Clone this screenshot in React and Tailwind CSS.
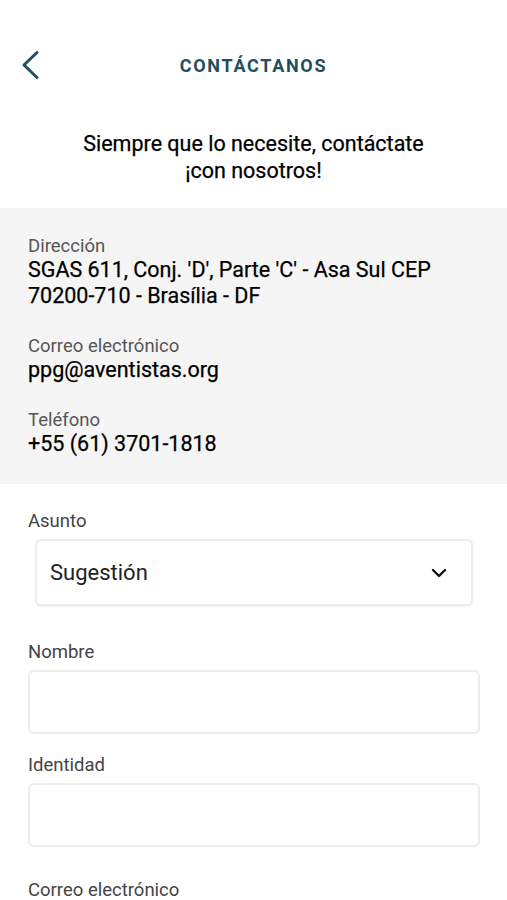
import React from 'react';
import { ChevronDown } from 'lucide-react';

const InfoItem = ({ label, children, className = '' }) => (
  <div className={className}>
    <p className="text-[18.5px] leading-[22px] text-[#555555]">{label}</p>
    <p className="text-[21.5px] leading-[26px] text-black [-webkit-text-stroke:0.25px_black]">{children}</p>
  </div>
);

const Field = ({ label, className = '' }) => (
  <div className={className}>
    <label className="block text-[18.5px] leading-[22px] text-[#444444]">{label}</label>
    <input
      type="text"
      className="mt-[7px] block h-[64px] w-[452px] rounded-[6px] border-2 border-[#ececec] bg-white px-4 outline-none"
    />
  </div>
);

export default function App() {
  return (
    <div className="min-h-[900px] w-[507px] overflow-hidden bg-white font-['Roboto',sans-serif]">
      <header className="relative flex h-[130px] items-center justify-center">
        <button className="absolute left-[20px] top-[50px] text-[#1f4f60]" aria-label="Volver">
          <svg width="20" height="30" viewBox="0 0 20 30" fill="none">
            <polyline
              points="17,2.5 4,15 17,27.5"
              stroke="currentColor"
              strokeWidth="3"
              strokeLinecap="round"
              strokeLinejoin="round"
            />
          </svg>
        </button>
        <h1 className="text-[18px] font-bold tracking-[1.7px] text-[#1f4f60]">CONTÁCTANOS</h1>
      </header>

      <p className="text-center text-[21.5px] leading-[27px] text-black [-webkit-text-stroke:0.25px_black]">
        Siempre que lo necesite, contáctate
        <br />
        ¡con nosotros!
      </p>

      <section className="mt-[24px] bg-[#f5f5f5] px-[28px] pb-[27px] pt-[27px]">
        <InfoItem label="Dirección">
          SGAS 611, Conj. 'D', Parte 'C' - Asa Sul CEP
          <br />
          70200-710 - Brasília - DF
        </InfoItem>
        <InfoItem label="Correo electrónico" className="mt-[26px]">
          ppg@aventistas.org
        </InfoItem>
        <InfoItem label="Teléfono" className="mt-[26px]">
          +55 (61) 3701-1818
        </InfoItem>
      </section>

      <form className="px-[28px] pt-[26px]">
        <label className="block text-[18.5px] leading-[22px] text-[#444444]">Asunto</label>
        <div className="ml-[7px] mt-[7px] flex h-[67px] w-[438px] items-center justify-between rounded-[6px] border-2 border-[#ececec] bg-white pl-[13px] pr-[20px] shadow-[0_1px_2px_rgba(0,0,0,0.06)]">
          <span className="text-[22px] text-[#222222]">Sugestión</span>
          <ChevronDown className="h-6 w-6 text-[#111111]" strokeWidth={2.4} />
        </div>

        <Field label="Nombre" className="mt-[35px]" />
        <Field label="Identidad" className="mt-[20px]" />
        <label className="mt-[32px] block text-[18.5px] leading-[22px] text-[#444444]">
          Correo electrónico
        </label>
      </form>
    </div>
  );
}
